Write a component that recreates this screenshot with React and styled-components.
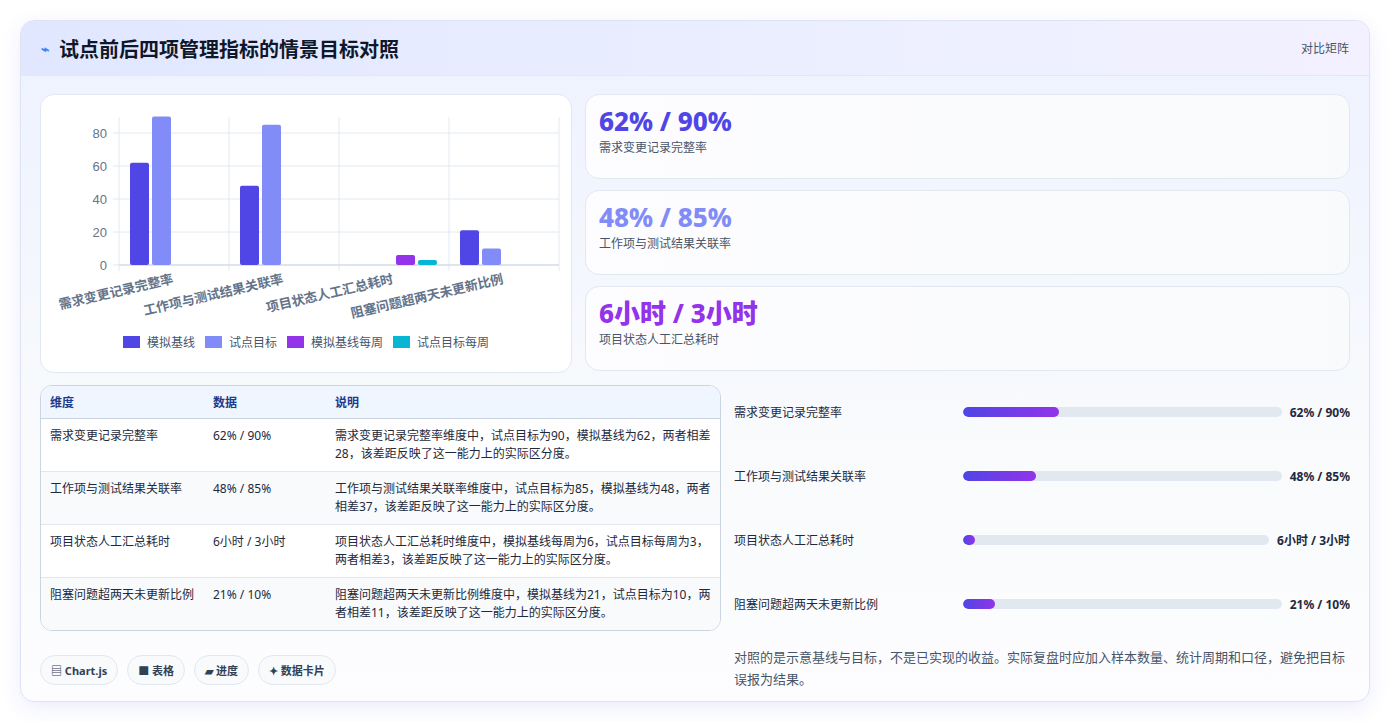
import React from "react";
import styled, { createGlobalStyle } from "styled-components";

const Global = createGlobalStyle`
  body { margin: 0; background: #fff; font-family: "Noto Sans", "Noto Sans CJK SC", sans-serif; color: #1e293b; }
`;

const rows = [
  { name: "需求变更记录完整率", data: "62% / 90%", a: 62, b: 90, note: "需求变更记录完整率维度中，试点目标为90，模拟基线为62，两者相差28，该差距反映了这一能力上的实际区分度。", fill: 30 },
  { name: "工作项与测试结果关联率", data: "48% / 85%", a: 48, b: 85, note: "工作项与测试结果关联率维度中，试点目标为85，模拟基线为48，两者相差37，该差距反映了这一能力上的实际区分度。", fill: 23 },
  { name: "项目状态人工汇总耗时", data: "6小时 / 3小时", a: 6, b: 3, weekly: true, note: "项目状态人工汇总耗时维度中，模拟基线每周为6，试点目标每周为3，两者相差3，该差距反映了这一能力上的实际区分度。", fill: 2 },
  { name: "阻塞问题超两天未更新比例", data: "21% / 10%", a: 21, b: 10, note: "阻塞问题超两天未更新比例维度中，模拟基线为21，试点目标为10，两者相差11，该差距反映了这一能力上的实际区分度。", fill: 10 },
];

const stats = [
  { v: "62% / 90%", l: "需求变更记录完整率", c: "#4f46e5" },
  { v: "48% / 85%", l: "工作项与测试结果关联率", c: "#818cf8" },
  { v: "6小时 / 3小时", l: "项目状态人工汇总耗时", c: "#9333ea" },
];

function Chart() {
  const y0 = 170, k = 1.65, x0 = 78;
  const colors = ["#4f46e5", "#818cf8", "#9333ea", "#06b6d4"];
  return (
    <svg width="530" height="277" style={{ display: "block" }}>
      {[0, 20, 40, 60, 80].map((t) => (
        <g key={t}>
          <line x1={x0 - 6} x2={518} y1={y0 - t * k} y2={y0 - t * k} stroke="#e2e8f0" />
          <text x={x0 - 12} y={y0 - t * k + 5} textAnchor="end" fontSize="13" fill="#64748b" fontFamily="Liberation Sans">{t}</text>
        </g>
      ))}
      {[0, 1, 2, 3, 4].map((i) => (
        <line key={i} x1={x0 + i * 110} x2={x0 + i * 110} y1={22} y2={y0 + 6} stroke="#e2e8f0" />
      ))}
      <line x1={x0} x2={518} y1={y0} y2={y0} stroke="#cbd5e1" />
      {rows.map((r, i) => {
        const cx = x0 + i * 110;
        const ca = r.weekly ? colors[2] : colors[0];
        const cb = r.weekly ? colors[3] : colors[1];
        const xa = r.weekly ? cx + 57 : cx + 11;
        return (
          <g key={i}>
            <rect x={xa} y={y0 - r.a * k} width="19" height={r.a * k} rx="2" fill={ca} />
            <rect x={xa + 22} y={y0 - r.b * k} width="19" height={r.b * k} rx="2" fill={cb} />
            <text transform={`translate(${cx + 55},${y0 + 18}) rotate(-13)`} textAnchor="end" fontSize="13" fontWeight="700" fill="#64748b">{r.name}</text>
          </g>
        );
      })}
      <g fontSize="12" fill="#475569">
        {["模拟基线", "试点目标", "模拟基线每周", "试点目标每周"].map((l, i) => {
          const xs = [82, 164, 246, 352][i];
          return (
            <g key={l}>
              <rect x={xs} y={241} width="17" height="12" fill={colors[i]} />
              <text x={xs + 24} y={252}>{l}</text>
            </g>
          );
        })}
      </g>
    </svg>
  );
}

export default function App() {
  return (
    <Page>
      <Global />
      <Panel>
        <Header>
          <Title><Bolt>⌁</Bolt>试点前后四项管理指标的情景目标对照</Title>
          <Tag>对比矩阵</Tag>
        </Header>
        <Body>
          <Top>
            <ChartCard><Chart /></ChartCard>
            <StatCol>
              {stats.map((s) => (
                <StatCard key={s.l}>
                  <StatValue color={s.c}>{s.v}</StatValue>
                  <StatLabel>{s.l}</StatLabel>
                </StatCard>
              ))}
            </StatCol>
          </Top>
          <Bottom>
            <div>
              <Table>
                <thead>
                  <tr><Th>维度</Th><Th>数据</Th><Th>说明</Th></tr>
                </thead>
                <tbody>
                  {rows.map((r) => (
                    <tr key={r.name}><Td>{r.name}</Td><Td>{r.data}</Td><Td>{r.note}</Td></tr>
                  ))}
                </tbody>
              </Table>
              <Chips>
                <Chip>▤ Chart.js</Chip>
                <Chip>■ 表格</Chip>
                <Chip>▰ 进度</Chip>
                <Chip>✦ 数据卡片</Chip>
              </Chips>
            </div>
            <Right>
              <Bars>
                {rows.map((r) => (
                  <BarRow key={r.name}>
                    <BarName>{r.name}</BarName>
                    <Track><Fill style={{ width: `max(12px, ${r.fill}%)` }} /></Track>
                    <BarVal>{r.data}</BarVal>
                  </BarRow>
                ))}
              </Bars>
              <Note>对照的是示意基线与目标，不是已实现的收益。实际复盘时应加入样本数量、统计周期和口径，避免把目标误报为结果。</Note>
            </Right>
          </Bottom>
        </Body>
      </Panel>
    </Page>
  );
}

const Page = styled.div`padding: 20px;`;
const Panel = styled.div`
  width: 1350px; height: 682px; box-sizing: border-box;
  border: 1px solid #dde3f5; border-radius: 14px; overflow: hidden;
  background: linear-gradient(180deg, #eef2ff 0%, #f8fafc 60%, #fdfdff 100%);
  box-shadow: 0 6px 20px rgba(99, 102, 241, 0.12);
`;
const Header = styled.div`
  height: 55px; box-sizing: border-box; display: flex; align-items: center; justify-content: space-between;
  padding: 0 20px; background: linear-gradient(90deg, #e0e7ff, #eef0ff 70%, #f3f0ff);
  border-bottom: 1px solid #e2e8f0;
`;
const Title = styled.div`font-size: 20px; font-weight: 700; color: #0f172a; display: flex; align-items: center; gap: 10px;`;
const Bolt = styled.span`color: #3b82f6; font-size: 14px;`;
const Tag = styled.div`font-size: 12px; color: #475569;`;
const Body = styled.div`padding: 18px 19px 0 19px;`;
const Top = styled.div`display: grid; grid-template-columns: 532px 1fr; gap: 13px;`;
const ChartCard = styled.div`
  height: 277px; background: #fff; border: 1px solid #e2e8f0; border-radius: 14px; overflow: hidden;
`;
const StatCol = styled.div`display: flex; flex-direction: column; gap: 11px;`;
const StatCard = styled.div`
  height: 85px; box-sizing: border-box; padding: 9px 13px; border: 1px solid #e2e8f0; border-radius: 14px;
  background: linear-gradient(90deg, #fdfdff, #f8fafc);
`;
const StatValue = styled.div`font-size: 26px; font-weight: 800; color: ${(p) => p.color}; line-height: 34px;`;
const StatLabel = styled.div`font-size: 12px; color: #475569;`;
const Bottom = styled.div`display: grid; grid-template-columns: 681px 1fr; gap: 13px; margin-top: 12px;`;
const Table = styled.table`
  width: 100%; border-collapse: separate; border-spacing: 0; border: 1px solid #cbd5e1; border-radius: 12px; overflow: hidden;
  font-size: 12px; background: #fff;
  tbody tr:nth-child(even) td { background: #f8fafc; }
`;
const Th = styled.th`
  text-align: left; font-weight: 700; color: #1e3a8a; background: #eff6ff; padding: 7px 9px; border-bottom: 1px solid #cbd5e1;
  &:nth-child(1) { width: 145px; } &:nth-child(2) { width: 104px; }
`;
const Td = styled.td`
  padding: 8px 9px; color: #1e293b; vertical-align: top; line-height: 18px; height: 36px; border-bottom: 1px solid #e2e8f0;
  tr:last-child & { border-bottom: none; }
`;
const Chips = styled.div`display: flex; gap: 9px; margin-top: 24px;`;
const Chip = styled.div`
  font-size: 11px; font-weight: 700; color: #334155; padding: 6px 10px; border: 1px solid #e2e8f0; border-radius: 16px; background: #f8fafc;
`;
const Right = styled.div`display: flex; flex-direction: column;`;
const Bars = styled.div`display: flex; flex-direction: column; margin-top: -5px;`;
const BarRow = styled.div`display: flex; align-items: center; height: 64px;`;
const BarName = styled.div`width: 229px; font-size: 12px; color: #1e293b;`;
const Track = styled.div`flex: 1; height: 10px; background: #e2e8f0; border-radius: 5px; overflow: hidden;`;
const Fill = styled.div`height: 100%; border-radius: 5px; background: linear-gradient(90deg, #4f46e5, #9333ea);`;
const BarVal = styled.div`margin-left: 8px; font-size: 12px; font-weight: 700; color: #1e293b; white-space: nowrap;`;
const Note = styled.div`font-size: 13px; color: #475569; line-height: 22px; margin-top: 10px;`;
